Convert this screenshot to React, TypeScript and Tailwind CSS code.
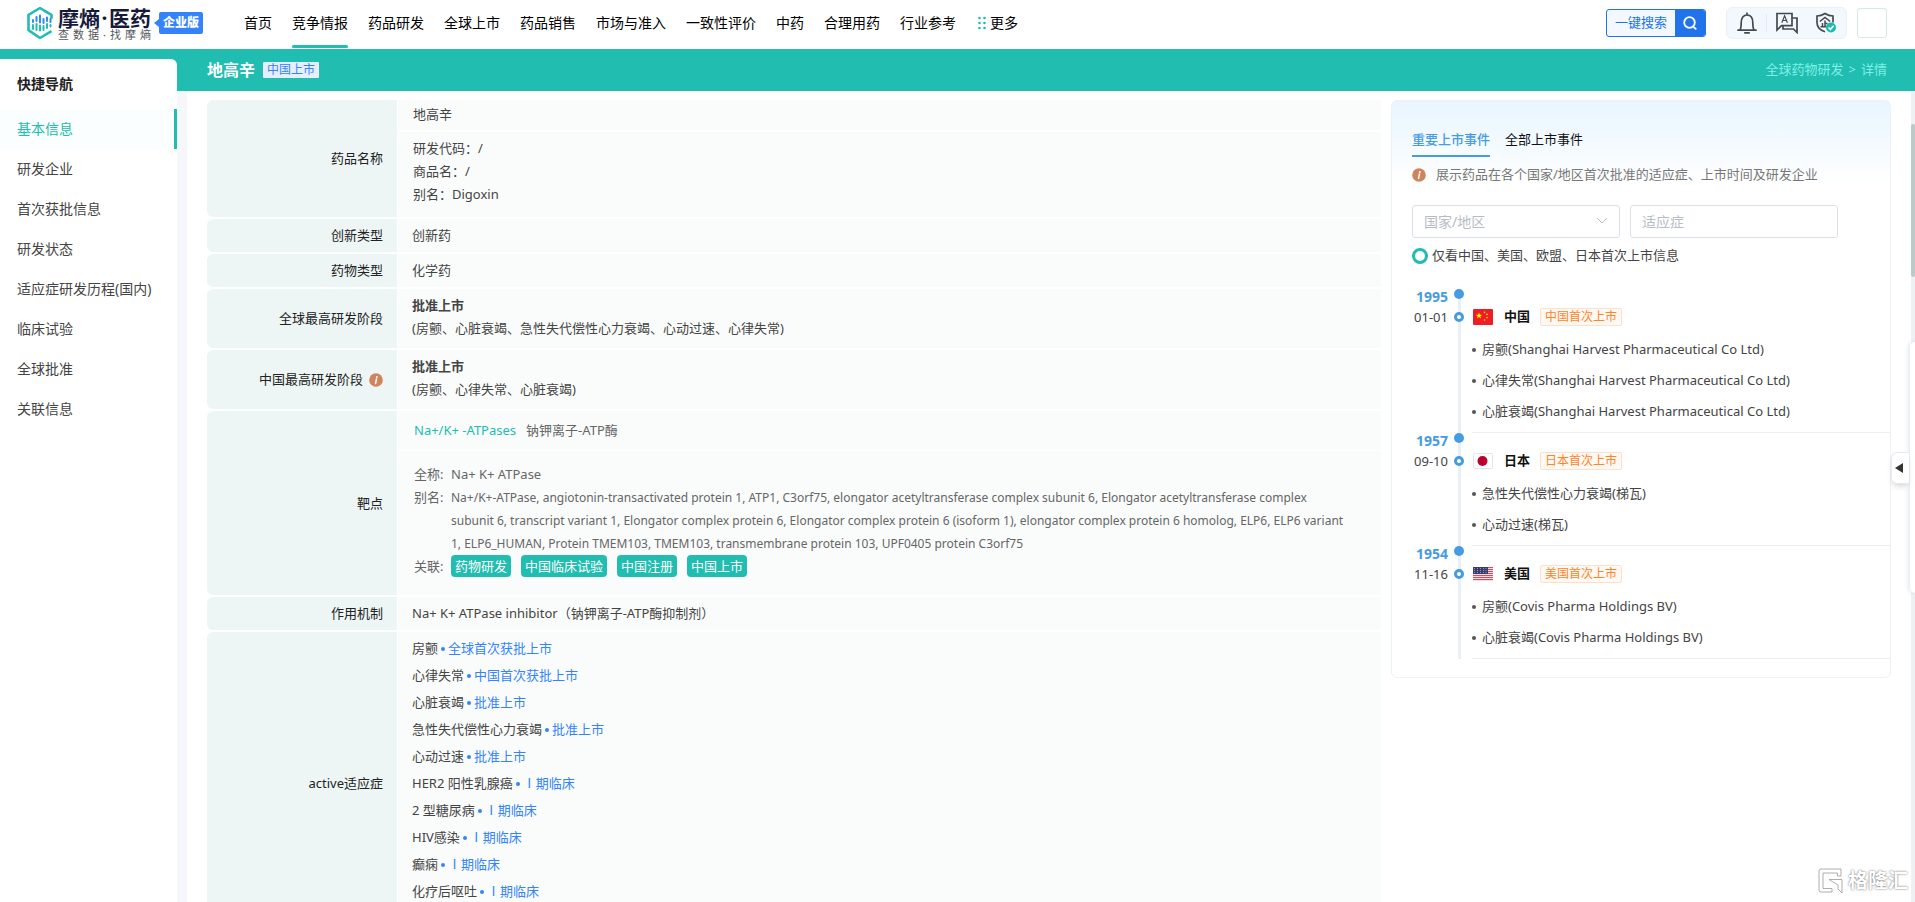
import { Fragment } from "react";

const navItems = ["首页", "竞争情报", "药品研发", "全球上市", "药品销售", "市场与准入", "一致性评价", "中药", "合理用药", "行业参考"];

const sideItems = ["基本信息", "研发企业", "首次获批信息", "研发状态", "适应症研发历程(国内)", "临床试验", "全球批准", "关联信息"];

const indications = [
    { name: "房颤", stage: "全球首次获批上市" },
    { name: "心律失常", stage: "中国首次获批上市" },
    { name: "心脏衰竭", stage: "批准上市" },
    { name: "急性失代偿性心力衰竭", stage: "批准上市" },
    { name: "心动过速", stage: "批准上市" },
    { name: "HER2 阳性乳腺癌", stage: "Ⅰ期临床" },
    { name: "2 型糖尿病", stage: "Ⅰ期临床" },
    { name: "HIV感染", stage: "Ⅰ期临床" },
    { name: "癫痫", stage: "Ⅰ期临床" },
    { name: "化疗后呕吐", stage: "Ⅰ期临床" },
];

const events = [
    {
        year: "1995",
        date: "01-01",
        country: "中国",
        flag: <ChinaFlag />,
        items: [
            "房颤(Shanghai Harvest Pharmaceutical Co Ltd)",
            "心律失常(Shanghai Harvest Pharmaceutical Co Ltd)",
            "心脏衰竭(Shanghai Harvest Pharmaceutical Co Ltd)",
        ],
    },
    {
        year: "1957",
        date: "09-10",
        country: "日本",
        flag: <JapanFlag />,
        items: ["急性失代偿性心力衰竭(梯瓦)", "心动过速(梯瓦)"],
    },
    {
        year: "1954",
        date: "11-16",
        country: "美国",
        flag: <UsaFlag />,
        items: ["房颤(Covis Pharma Holdings BV)", "心脏衰竭(Covis Pharma Holdings BV)"],
    },
];

function ChinaFlag() {
    return (
        <svg width="20" height="16" viewBox="0 0 20 16">
            <rect width="20" height="16" rx="1" fill="#ee1c25" />
            <path d="M6 3.6l.8 2.2h2.4L7.300 7.200l.7 2.300L6 8.100 4 9.500l.7-2.300L2.800 5.800h2.400z" fill="#ffff00" />
            <circle cx="11.500" cy="3.400" r=".8" fill="#ffde00" />
            <circle cx="14" cy="5.400" r=".8" fill="#ffde00" />
            <circle cx="14" cy="8.600" r=".8" fill="#ffde00" />
            <circle cx="11.500" cy="11" r=".8" fill="#ffde00" />
        </svg>
    );
}

function JapanFlag() {
    return (
        <svg width="20" height="16" viewBox="0 0 20 16">
            <rect x=".5" y=".5" width="19" height="15" rx="1" fill="#fff" stroke="#e3e5e8" />
            <circle cx="9.500" cy="8" r="5" fill="#bc002d" />
        </svg>
    );
}

function UsaFlag() {
    return (
        <svg width="20" height="16" viewBox="0 0 20 16">
            <rect y="1" width="20" height="14" fill="#fff" />
            {[1, 3, 5, 7, 9, 11, 13].map((y) => (
                <rect key={y} y={y} width="20" height="1.200" fill="#c9505f" />
            ))}
            <rect y="1" width="15" height="7" fill="#3c3b6e" />
            {[2, 4, 6].map((y) =>
                [1.5, 4.5, 7.5, 10.5, 13].map((x) => <circle key={`${x}-${y}`} cx={x} cy={y + 0.5} r=".5" fill="#aab4d4" />)
            )}
        </svg>
    );
}

function InfoIcon() {
    return (
        <svg width="14" height="14" viewBox="0 0 14 14" className="shrink-0">
            <circle cx="7" cy="7" r="6.800" fill="#d1845c" />
            <circle cx="7.800" cy="3.900" r="1" fill="#fff" />
            <path d="M7.500 6l-1 4.500" stroke="#fff" strokeWidth="1.500" strokeLinecap="round" />
        </svg>
    );
}

function Logo() {
    return (
        <a href="#" className="mb-[3px] flex items-center">
            <svg width="28" height="34" viewBox="0 0 28 34" fill="none">
                <path d="M18 4.500L14 2 2.500 8.800v15.400L8 27.800M10 29.500l4 2.500 11.500-6.800M18 4.500l7.500 4.300v4M2.500 19v5.200L14 32" stroke="#20bdb0" strokeWidth="2.600" strokeLinejoin="round" />
                <path d="M7 14v2M10.500 11v4M14 9.500v7M17.500 13v4M21 11.500v3.500M24.500 13v3" stroke="#2f8af5" strokeWidth="2" strokeLinecap="round" />
                <path d="M7 19v4M10.500 18v6M14 19.500v5M17.500 20v4M21 18v4M24.500 19v1.500" stroke="#20bdb0" strokeWidth="2" strokeLinecap="round" />
            </svg>
            <span className="ml-1 flex w-[93px] flex-col text-[#16193a]">
                <span className="flex justify-between text-[21px] leading-[22px] font-bold">
                    <span>摩熵</span>
                    <span>·</span>
                    <span>医药</span>
                </span>
                <span className="flex justify-between text-[11px] leading-[11px] text-[#55575c]">
                    {"查数据·找摩熵".split("").map((c, i) => (
                        <span key={i}>{c}</span>
                    ))}
                </span>
            </span>
            <svg width="5" height="8" viewBox="0 0 5 8" className="ml-[3px]">
                <path d="M5 0v8L0 4z" fill="#3483fa" />
            </svg>
            <span className="h-[22px] rounded-xs bg-[#3483fa] px-1 text-xs leading-[22px] font-black text-white">企业版</span>
        </a>
    );
}

function Header() {
    return (
        <header className="flex h-[49px] shrink-0 items-center bg-white pr-7 pl-[26px]">
            <Logo />
            <nav className="ml-[41px] flex h-full gap-5 text-sm leading-[46px] text-black">
                {navItems.map((item) => (
                    <a key={item} href="#" className="relative block h-full whitespace-nowrap">
                        {item}
                        {item === "竞争情报" && <span className="absolute inset-x-0 bottom-px h-[3px] rounded-full bg-[#20bdb0]" />}
                    </a>
                ))}
                <button className="ml-0.5 flex h-[46px] items-center gap-1 whitespace-nowrap">
                    <svg width="8" height="14" viewBox="0 0 8 14" fill="#20bdb0">
                        <circle cx="1.500" cy="2" r="1.300" />
                        <circle cx="6.500" cy="2" r="1.300" />
                        <circle cx="1.500" cy="7" r="1.300" />
                        <circle cx="6.500" cy="7" r="1.300" />
                        <circle cx="1.500" cy="12" r="1.300" />
                        <circle cx="6.500" cy="12" r="1.300" />
                    </svg>
                    更多
                </button>
            </nav>
            <div className="mb-[3px] ml-auto flex items-center">
                <button className="flex h-7 w-[100px] items-center overflow-hidden rounded-[3px] border border-[#2173ec] bg-[#f3f8ff] text-[13px] text-[#2173ec]">
                    <span className="flex-1 whitespace-nowrap">一键搜索</span>
                    <span className="flex h-full w-[30px] items-center justify-center bg-[#2173ec]">
                        <svg width="16" height="16" viewBox="0 0 16 16" fill="none" stroke="#fff" strokeWidth="1.800" strokeLinecap="round">
                            <circle cx="7.500" cy="7.500" r="5.300" />
                            <path d="M11.500 11.800l2.200 2" />
                        </svg>
                    </span>
                </button>
                <div className="ml-5 flex h-8 w-[121px] items-center rounded-md border border-[#e9f0fa] bg-[#f3f8ff] pl-[9px] text-[#45494d]">
                    <button aria-label="消息">
                        <svg width="22" height="22" viewBox="0 0 22 22" fill="none" stroke="currentColor" strokeWidth="1.700" strokeLinecap="round" strokeLinejoin="round">
                            <path d="M11 1.200v1.600M2 18.200h18M4 18c1-1.500 1.200-3 1.200-7.200C5.200 5.900 7.500 3 11 3s5.800 2.900 5.800 7.800c0 4.200.2 5.700 1.200 7.200M8.800 20.800h4.400" />
                        </svg>
                    </button>
                    <span className="ml-2 h-[18px] w-px bg-[#e3eaf2]" />
                    <button aria-label="翻译" className="ml-2">
                        <svg width="24" height="22" viewBox="0 0 24 22" fill="none" stroke="currentColor" strokeWidth="1.700">
                            <path d="M2 1.500h15v12.200H6.500L2 18z" />
                            <path d="M17.500 6H22v14.500L18.500 17H8v-3" />
                            <path d="M6.800 10.800l2.800-7 2.800 7M7.800 8.500h3.600" strokeWidth="1.200" />
                        </svg>
                    </button>
                    <button aria-label="企业认证" className="ml-4">
                        <svg width="22" height="22" viewBox="0 0 22 22" fill="none" stroke="currentColor" strokeWidth="1.700">
                            <path d="M18 10.500V4c-3.200 0-5.500-.8-8-2.500C7.500 3.200 5.200 4 2 4v6.500c0 4.500 3 7.600 8 9.300" />
                            <path d="M4.800 9.500L10 5.500l5.200 4M10 8.500v6M7.500 11v3.500M10 11.500h2.500M5.500 14.800h6" strokeWidth="1.500" />
                            <circle cx="16" cy="15.500" r="5" fill="#14bdb0" stroke="none" />
                            <path d="M13.500 15.500l1.900 1.900 3.200-3.600" stroke="#fff" />
                        </svg>
                    </button>
                </div>
                <button aria-label="账户" className="ml-[10px] h-[30px] w-[30px] rounded-[3px] border border-[#d3e9e2] bg-white" />
            </div>
        </header>
    );
}

function Sidebar() {
    return (
        <div className="flex w-[177px] shrink-0 bg-[#20bdb0] pt-[10px]">
            <aside className="flex-1 rounded-tr-md bg-white text-sm">
                <h2 className="pl-[17px] leading-[50px] font-bold text-[#222]">快捷导航</h2>
                {sideItems.map((item, index) => (
                    <a
                        key={item}
                        href="#"
                        className={
                            index === 0
                                ? "block border-r-3 border-[#20bdb0] bg-[#fafefe] pl-[17px] leading-[40px] text-[#20bdb0]"
                                : "block pl-[17px] leading-[40px] whitespace-nowrap text-[#444]"
                        }
                    >
                        {item}
                    </a>
                ))}
            </aside>
        </div>
    );
}

function Row({ label, children }: { label: React.ReactNode; children: React.ReactNode }) {
    return (
        <tr>
            <th scope="row" className="w-[190px] rounded-l-md bg-[#edf6f5] pr-[14px] text-right align-middle font-normal text-[#222]">
                {label}
            </th>
            <td className="border-l border-white bg-[#fafcfc] p-0 align-middle">{children}</td>
        </tr>
    );
}

function DrugTable() {
    return (
        <table className="w-full border-separate border-spacing-x-0 border-spacing-y-[2px] text-[13px] leading-[23px] text-[#444]">
            <tbody>
                <Row label="药品名称">
                    <p className="border-b-2 border-white pt-[3px] pb-[4px] pl-[15px]">地高辛</p>
                    <div className="pt-[5px] pb-[11px] pl-[15px]">
                        <p>研发代码：/</p>
                        <p>商品名：/</p>
                        <p>别名：Digoxin</p>
                    </div>
                </Row>
                <Row label="创新类型">
                    <p className="py-[5px] pl-[14px]">创新药</p>
                </Row>
                <Row label="药物类型">
                    <p className="py-[5px] pl-[14px]">化学药</p>
                </Row>
                <Row label="全球最高研发阶段">
                    <p className="pt-[5px] pl-[14px] font-bold">批准上市</p>
                    <p className="pb-[8px] pl-[14px]">(房颤、心脏衰竭、急性失代偿性心力衰竭、心动过速、心律失常)</p>
                </Row>
                <Row
                    label={
                        <span className="flex items-center justify-end gap-[6px]">
                            中国最高研发阶段
                            <InfoIcon />
                        </span>
                    }
                >
                    <p className="pt-[5px] pl-[14px] font-bold">批准上市</p>
                    <p className="pb-[8px] pl-[14px]">(房颤、心律失常、心脏衰竭)</p>
                </Row>
                <Row label="靶点">
                    <div className="flex gap-[10px] border-b border-white py-[8px] pl-[16px] text-[#666]">
                        <a href="#" className="text-[#20bdb0]">Na+/K+ -ATPases</a>
                        <span>钠钾离子-ATP酶</span>
                    </div>
                    <dl className="grid grid-cols-[37px_1fr] pt-[12px] pr-8 pb-[17px] pl-[16px] text-[#666]">
                        <dt>全称:</dt>
                        <dd>Na+ K+ ATPase</dd>
                        <dt>别名:</dt>
                        <dd className="text-xs leading-[23px]">
                            Na+/K+-ATPase, angiotonin-transactivated protein 1, ATP1, C3orf75, elongator acetyltransferase complex subunit 6, Elongator
                            acetyltransferase complex subunit 6, transcript variant 1, Elongator complex protein 6, Elongator complex protein 6 (isoform 1),
                            elongator complex protein 6 homolog, ELP6, ELP6 variant 1, ELP6_HUMAN, Protein TMEM103, TMEM103, transmembrane protein 103,
                            UPF0405 protein C3orf75
                        </dd>
                        <dt>关联:</dt>
                        <dd className="flex gap-[10px]">
                            {["药物研发", "中国临床试验", "中国注册", "中国上市"].map((tag) => (
                                <a key={tag} href="#" className="h-[22px] rounded-[4px] bg-[#20bdb0] px-1 leading-[22px] text-white">
                                    {tag}
                                </a>
                            ))}
                        </dd>
                    </dl>
                </Row>
                <Row label="作用机制">
                    <p className="py-[5px] pl-[14px]">Na+ K+ ATPase inhibitor（钠钾离子-ATP酶抑制剂）</p>
                </Row>
                <Row label="active适应症">
                    <ul className="pt-[3px] pb-[29px] pl-[14px] leading-[27px]">
                        {indications.map((row) => (
                            <li key={row.name} className="flex items-center">
                                {row.name}
                                <span className="mx-[3px] h-1 w-1 rounded-full bg-[#3483fa]" />
                                <a href="#" className="text-[#3483fa]">{row.stage}</a>
                            </li>
                        ))}
                    </ul>
                </Row>
            </tbody>
        </table>
    );
}

function EventPanel() {
    return (
        <section className="w-[500px] shrink-0 rounded-md border border-[#eef1f5] bg-[linear-gradient(#e8f5ff,#ffffff_84px)] pt-6 pb-[18px] pl-5 text-[13px] text-[#444]">
            <div className="flex gap-[15px] leading-[28px]">
                <button className="h-8 border-b-2 border-[#479be2] pb-[2px] font-medium text-[#479be2]">重要上市事件</button>
                <button className="h-8 border-b-2 border-transparent pb-[2px] text-[#111]">全部上市事件</button>
            </div>
            <p className="mt-[6px] flex h-6 items-center gap-[10px] text-[#777]">
                <InfoIcon />
                展示药品在各个国家/地区首次批准的适应症、上市时间及研发企业
            </p>
            <div className="mt-[18px] flex gap-[10px] text-sm">
                <div className="relative">
                    <select aria-label="国家/地区" className="h-[33px] w-[208px] appearance-none rounded-[3px] border border-[#dcdfe6] bg-white pl-[11px] text-[#b8bcc6]">
                        <option>国家/地区</option>
                    </select>
                    <svg width="12" height="8" viewBox="0 0 12 8" fill="none" stroke="#b8bcc6" className="pointer-events-none absolute top-3 right-3">
                        <path d="M1 1l5 5 5-5" />
                    </svg>
                </div>
                <input aria-label="适应症" placeholder="适应症" className="h-[33px] w-[208px] rounded-[3px] border border-[#dcdfe6] bg-white pl-[11px] placeholder:text-[#b8bcc6]" />
            </div>
            <label className="mt-[6px] flex h-6 items-center gap-1">
                <input type="radio" name="region" className="h-4 w-4 appearance-none rounded-full border-3 border-[#20bdb0] bg-white" />
                仅看中国、美国、欧盟、日本首次上市信息
            </label>
            <ol className="mt-[21px]">
                {events.map((event) => (
                    <li key={event.year} className="relative grid grid-cols-[36px_10px_1fr] gap-x-[6px]">
                        <span className="absolute top-1 bottom-0 left-[46px] w-[3px] bg-[#e9eff8]" />
                        <span className="h-4 text-right text-sm leading-[16px] font-bold text-[#479be2]">{event.year}</span>
                        <span className="relative h-[10px] w-[10px] rounded-full bg-[#479be2]" />
                        <span />
                        <span className="text-right leading-[24px]">{event.date}</span>
                        <span className="relative mt-[7px] h-[10px] w-[10px] rounded-full border-3 border-[#479be2] bg-white" />
                        <div className="ml-[3px] flex h-6 items-center">
                            {event.flag}
                            <b className="ml-[11px] text-[#111]">{event.country}</b>
                            <span className="ml-[10px] h-[18px] rounded-xs border border-[#fde0cc] bg-[#fff8f3] px-1 text-xs leading-[16px] text-[#ff8429]">
                                {event.country}首次上市
                            </span>
                        </div>
                        <ul className="col-start-3 ml-[2px] border-b border-[#eceef0] py-[5px]">
                            {event.items.map((item) => (
                                <li key={item} className="flex items-center gap-[6px] leading-[31px]">
                                    <span className="h-1 w-1 rounded-full bg-[#555]" />
                                    {item}
                                </li>
                            ))}
                        </ul>
                    </li>
                ))}
            </ol>
        </section>
    );
}

function Watermark() {
    return (
        <div className="absolute right-[7px] bottom-2 flex items-center gap-1 text-[20px] leading-[26px] font-bold text-white [text-shadow:0_0_2px_#555]">
            <svg width="26" height="26" viewBox="0 0 26 26" fill="#fff" stroke="#999" strokeWidth=".8">
                <path d="M3 1h20v7h-3.500V5H5v15.500h9V24H3a2 2 0 0 1-2-2V3a2 2 0 0 1 2-2z" />
                <path d="M11 11.500h13V25l-4-4v-4z" />
            </svg>
            格隆汇
        </div>
    );
}

export default function App() {
    return (
        <div className="relative flex h-screen flex-col overflow-hidden bg-white font-['Noto_Sans','Noto_Sans_CJK_SC',sans-serif]">
            <Header />
            <div className="flex min-h-0 flex-1">
                <Sidebar />
                <main className="flex min-w-0 flex-1 flex-col">
                    <div className="flex h-[42px] shrink-0 items-center bg-[#20bdb0] pr-7 pl-[30px]">
                        <h1 className="text-base font-bold text-white">地高辛</h1>
                        <span className="ml-2 h-4 rounded-[1px] bg-[#e5efff] px-1 text-xs leading-[16px] text-[#3483fa]">中国上市</span>
                        <p className="ml-auto flex gap-[5px] text-[13px] text-[#7ff0e6]">
                            {["全球药物研发", "详情"].map((crumb, i) => (
                                <Fragment key={crumb}>
                                    {i > 0 && <span>&gt;</span>}
                                    <a href="#">{crumb}</a>
                                </Fragment>
                            ))}
                        </p>
                    </div>
                    <div className="flex min-h-0 flex-1 bg-[#f6f7fa] pl-[10px]">
                        <div className="flex min-w-0 flex-1 items-start gap-[10px] overflow-hidden bg-white pr-5 pl-5">
                            <div className="min-w-0 flex-1 pt-[7px]">
                                <DrugTable />
                            </div>
                            <div className="pt-[9px]">
                                <EventPanel />
                            </div>
                        </div>
                        <div className="w-1 bg-[#edf1f4] pt-[33px]">
                            <div className="h-[153px] rounded-full bg-[#b9cac8]" />
                        </div>
                    </div>
                </main>
            </div>
            <div className="absolute top-[342px] right-0 h-[251px] w-[5px] rounded-l-md bg-white shadow-[0_0_6px_#c9d6ea]" />
            <button aria-label="展开" className="absolute top-[452px] right-[6px] flex h-[32px] w-[18px] items-center rounded-l-md border border-r-0 border-[#e8eaee] bg-white pl-[3px] shadow-md">
                <svg width="8" height="10" viewBox="0 0 8 10" fill="#333">
                    <path d="M8 0v10L0 5z" />
                </svg>
            </button>
            <Watermark />
        </div>
    );
}
